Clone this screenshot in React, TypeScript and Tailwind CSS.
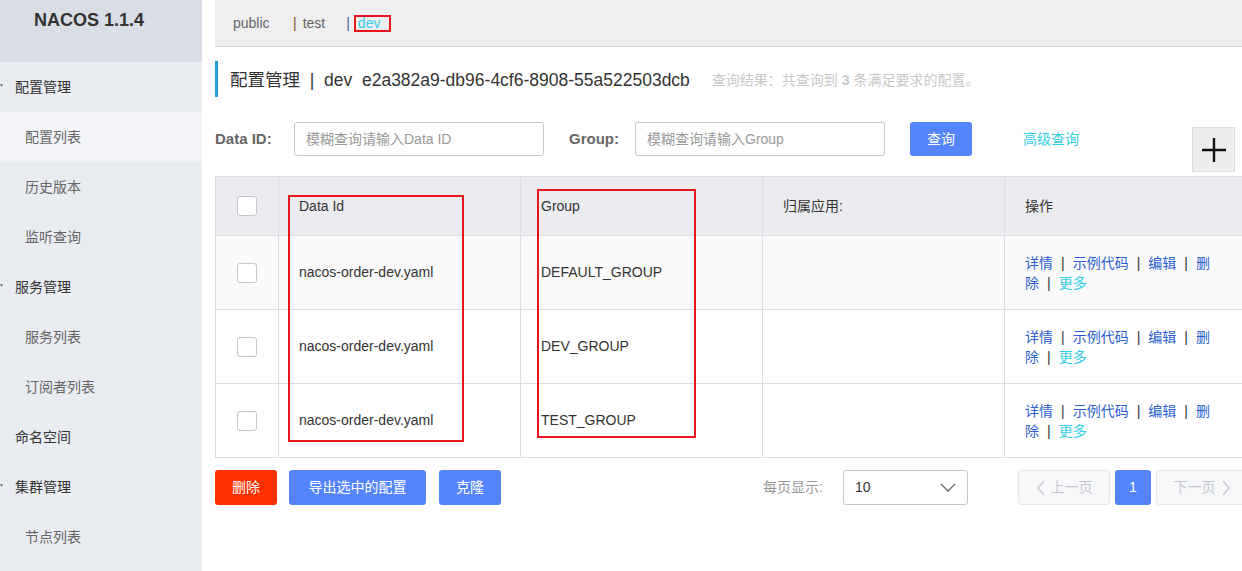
const FONT = '"Liberation Sans", "Noto Sans CJK SC", sans-serif';

const menu = [
  { label: "配置管理", parent: true },
  { label: "配置列表", active: true },
  { label: "历史版本" },
  { label: "监听查询" },
  { label: "服务管理", parent: true },
  { label: "服务列表" },
  { label: "订阅者列表" },
  { label: "命名空间", top: true },
  { label: "集群管理", parent: true },
  { label: "节点列表" },
];

const rows = [
  { id: "nacos-order-dev.yaml", group: "DEFAULT_GROUP", hover: true },
  { id: "nacos-order-dev.yaml", group: "DEV_GROUP" },
  { id: "nacos-order-dev.yaml", group: "TEST_GROUP" },
];

function Checkbox() {
  return <div className="w-5 h-5 rounded-[3px] border border-[#c4c6cf] bg-white" />;
}

function Sidebar() {
  return (
    <aside className="w-[202px] h-[571px] shrink-0 bg-[#e9ecf1] flex flex-col">
      <div className="h-[62px] bg-[#d9dee6] pl-[34px] pt-[7px] text-[18px] font-bold text-[#333]">NACOS 1.1.4</div>
      {menu.map((m) => (
        <div
          key={m.label}
          className={`h-[50px] flex items-center text-[14px] relative ${m.active ? "bg-[#f2f4f7]" : ""} ${
            m.parent || m.top ? "pl-[15px] text-[#333]" : "pl-[25px] text-[#666]"
          }`}
        >
          {m.parent && (
            <svg className="absolute left-0 top-[22px]" width="4" height="4" viewBox="0 0 4 4">
              <path d="M0 0h3L1.5 3z" fill="#777" />
            </svg>
          )}
          {m.label}
        </div>
      ))}
    </aside>
  );
}

function Ops() {
  const sep = <span className="text-[#333] mx-[8px]">|</span>;
  return (
    <div className="w-[192px] text-[14px] leading-[20px] text-[#2b5fce]">
      <span>详情</span>
      {sep}
      <span>示例代码</span>
      {sep}
      <span>编辑</span>
      {sep}
      <span>删</span>
      <span>除</span>
      {sep}
      <span className="text-[#33cde5]">更多</span>
    </div>
  );
}

export default function App() {
  return (
    <div className="w-[1242px] h-[571px] flex bg-white overflow-hidden" style={{ fontFamily: FONT }}>
      <Sidebar />
      <main className="ml-[13px] flex-1 min-w-0 overflow-hidden">
        <div className="h-[47px] bg-[#efefef] border-b border-[#d6d6d6] flex items-center pl-[18px] text-[14px] text-[#666]">
          <span className="w-[40px]">public</span>
          <span className="ml-[20px] text-[#8a4b2a]">|</span>
          <span className="ml-[6px]">test</span>
          <span className="ml-[21px] text-[#3b6bb0]">|</span>
          <span className="ml-[4px] w-[37px] pl-[2px] text-[#33cde5] border-2 border-[#e8141e] leading-[12px] h-[17px]">dev</span>
        </div>

        <div className="mt-[14px] h-[36px] flex items-center border-l-[3px] border-[#1f9be0] pl-[12px] pt-[2px]">
          <span className="text-[17.5px] text-[#333]">配置管理&nbsp;&nbsp;|&nbsp;&nbsp;dev&nbsp;&nbsp;e2a382a9-db96-4cf6-8908-55a522503dcb</span>
          <span className="ml-[22px] text-[14px] text-[#c8c8c8]">
            查询结果：共查询到 <b>3</b> 条满足要求的配置。
          </span>
        </div>

        <div className="mt-[25px] flex items-start">
          <div className="h-[34px] flex items-center">
            <span className="text-[15px] font-bold text-[#666] w-[79px]">Data ID:</span>
            <input
              className="w-[250px] h-[34px] border border-[#c4c6cf] rounded-[3px] px-[11px] text-[14px] placeholder-[#999] outline-none"
              placeholder="模糊查询请输入Data ID"
            />
            <span className="text-[15px] font-bold text-[#666] ml-[25px] w-[66px]">Group:</span>
            <input
              className="w-[250px] h-[34px] border border-[#c4c6cf] rounded-[3px] px-[11px] text-[14px] placeholder-[#999] outline-none"
              placeholder="模糊查询请输入Group"
            />
            <button className="ml-[25px] w-[62px] h-[34px] bg-[#5584ff] rounded-[3px] text-white text-[14px]">查询</button>
            <span className="ml-[51px] text-[14px] text-[#33cde5]">高级查询</span>
          </div>
          <div className="ml-auto mr-[7px] mt-[5px] w-[43px] h-[45px] bg-[#eeeeee] border border-[#dcdcdc] flex items-center justify-center">
            <svg width="26" height="26" viewBox="0 0 26 26">
              <path d="M13 1v24M1 13h24" stroke="#111" strokeWidth="2.4" />
            </svg>
          </div>
        </div>

        <div className="relative mt-[4px] w-[1031px]">
          <table className="border-collapse table-fixed w-[1031px] text-[14px] text-[#333]">
            <colgroup>
              <col className="w-[63px]" />
              <col className="w-[242px]" />
              <col className="w-[242px]" />
              <col className="w-[242px]" />
              <col className="w-[242px]" />
            </colgroup>
            <thead>
              <tr className="h-[59px] bg-[#ebecf0]">
                <th className="border border-[#dcdee3]">
                  <div className="flex justify-center">
                    <Checkbox />
                  </div>
                </th>
                {["Data Id", "Group", "归属应用:", "操作"].map((h) => (
                  <th key={h} className="border border-[#dcdee3] text-left font-normal pl-[20px]">
                    {h}
                  </th>
                ))}
              </tr>
            </thead>
            <tbody>
              {rows.map((r) => (
                <tr key={r.group} className={`h-[74px] ${r.hover ? "bg-[#fafafa]" : "bg-white"}`}>
                  <td className="border border-[#dcdee3]">
                    <div className="flex justify-center">
                      <Checkbox />
                    </div>
                  </td>
                  <td className="border border-[#dcdee3] pl-[20px]">{r.id}</td>
                  <td className="border border-[#dcdee3] pl-[20px]">{r.group}</td>
                  <td className="border border-[#dcdee3]" />
                  <td className="border border-[#dcdee3] pl-[20px]">
                    <Ops />
                  </td>
                </tr>
              ))}
            </tbody>
          </table>
          <div className="absolute left-[73px] top-[19px] w-[176px] h-[247px] border-2 border-[#e8141e]" />
          <div className="absolute left-[322px] top-[13px] w-[159px] h-[249px] border-2 border-[#e8141e]" />
        </div>

        <div className="mt-[12px] flex items-center text-[14px] whitespace-nowrap">
          <button className="w-[62px] h-[35px] shrink-0 bg-[#ff3000] rounded-[3px] text-white">删除</button>
          <button className="ml-[12px] w-[137px] h-[35px] shrink-0 bg-[#5584ff] rounded-[3px] text-white">导出选中的配置</button>
          <button className="ml-[13px] w-[62px] h-[35px] shrink-0 bg-[#5584ff] rounded-[3px] text-white">克隆</button>
          <span className="ml-[262px] w-[80px] shrink-0 text-[#999]">每页显示:</span>
          <div className="w-[125px] h-[35px] shrink-0 border border-[#c4c6cf] rounded-[3px] flex items-center px-[11px] text-[#333]">
            <span>10</span>
            <svg className="ml-auto" width="16" height="10" viewBox="0 0 16 10">
              <path d="M1 1l7 7 7-7" stroke="#666" strokeWidth="1.3" fill="none" />
            </svg>
          </div>
          <div className="ml-[50px] w-[92px] h-[35px] shrink-0 border border-[#e6e7eb] bg-[#f7f8fa] rounded-[3px] flex items-center justify-center text-[#c4c6cf]">
            <svg width="10" height="16" viewBox="0 0 10 16" className="mr-[5px]">
              <path d="M8 1L2 8l6 7" stroke="#c4c6cf" strokeWidth="1.4" fill="none" />
            </svg>
            上一页
          </div>
          <div className="ml-[5px] w-[36px] h-[35px] shrink-0 bg-[#5584ff] rounded-[3px] text-white flex items-center justify-center">1</div>
          <div className="ml-[5px] w-[92px] h-[35px] shrink-0 border border-[#e6e7eb] bg-[#f7f8fa] rounded-[3px] flex items-center justify-center text-[#c4c6cf]">
            下一页
            <svg width="10" height="16" viewBox="0 0 10 16" className="ml-[5px]">
              <path d="M2 1l6 7-6 7" stroke="#c4c6cf" strokeWidth="1.4" fill="none" />
            </svg>
          </div>
        </div>
      </main>
    </div>
  );
}
